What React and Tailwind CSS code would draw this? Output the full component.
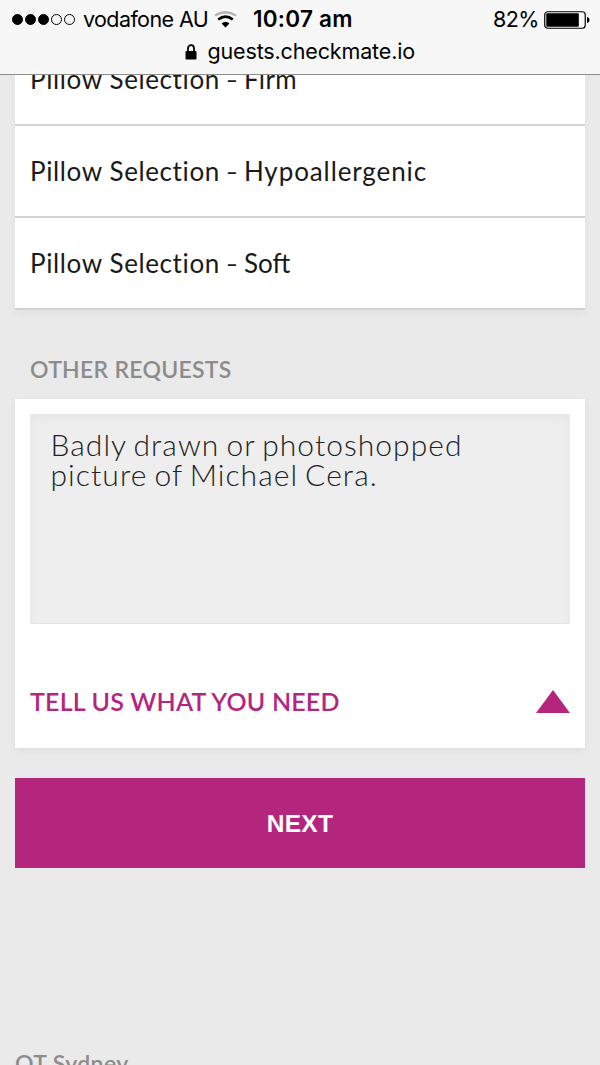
import React, { useState } from 'react';

const pillows = [
  { name: 'Firm', spacing: 'tracking-[0.3px]' },
  { name: 'Hypoallergenic', spacing: 'tracking-[0.9px]' },
  { name: 'Soft', spacing: 'tracking-normal' },
];

const StatusBar = () => (
  <header className="relative z-10 h-[75px] shrink-0 bg-[#f7f7f7] border-b border-[#8e8e8e] text-black font-['Inter',sans-serif]">
    <div className="flex h-[39px] items-center pl-3 pr-[10px] text-[21.5px] leading-none">
      <div className="flex gap-[2px]">
        {[1, 1, 1, 0, 0].map((on, i) => (
          <span key={i} className={`size-[11px] rounded-full border border-black ${on ? 'bg-black' : ''}`} />
        ))}
      </div>
      <span className="ml-[8px] w-[125px] whitespace-nowrap tracking-[-0.6px]">vodafone AU</span>
      <svg className="ml-[6px]" width="23" height="17" viewBox="0 0 23 17" fill="none">
        <path d="M1 4.6Q11.5 -2.2 22 4.6" stroke="#b5b5b5" strokeWidth="2.4" />
        <path d="M4.2 8.6Q11.5 2.8 18.8 8.6" stroke="#000" strokeWidth="2.6" />
        <path d="M7.6 12.6Q11.5 9 15.4 12.6L11.5 16.4Z" fill="#000" />
      </svg>
      <span className="ml-[16px] w-[101px] whitespace-nowrap text-[22.5px] font-semibold tracking-[0.25px]">10:07 am</span>
      <span className="ml-auto w-[45px] whitespace-nowrap tracking-[-0.6px]">82%</span>
      <svg className="ml-[6px]" width="46" height="18" viewBox="0 0 46 18">
        <rect x="0.75" y="0.75" width="40.5" height="16.5" rx="3" fill="none" stroke="#000" strokeWidth="1.2" />
        <rect x="2.3" y="2.3" width="32.5" height="13.4" rx="1" fill="#000" />
        <path d="M43 6Q45.6 6.5 45.6 9T43 12Z" fill="#000" />
      </svg>
    </div>
    <div className="flex h-[26px] items-center pl-[185px] text-[21.5px] leading-none">
      <svg width="12" height="16" viewBox="0 0 12 16">
        <path d="M3 8V4.5a3 3.3 0 0 1 6 0V8" fill="none" stroke="#000" strokeWidth="1.8" />
        <rect x="0.5" y="7" width="11" height="8.6" rx="1" fill="#000" />
      </svg>
      <span className="ml-[10.5px] whitespace-nowrap tracking-[-0.15px]">guests.checkmate.io</span>
    </div>
  </header>
);

const App = () => {
  const [request, setRequest] = useState('Badly drawn or photoshopped\npicture of Michael Cera.');

  return (
    <div className="flex h-[1065px] w-[600px] flex-col overflow-hidden bg-[#eaeaea] font-['Lato',sans-serif]">
      <StatusBar />
      <main className="-mt-[41px] px-[15px]">
        <ul className="bg-white shadow-[0_4px_8px_rgba(0,0,0,0.04)]">
          {pillows.map(({ name, spacing }) => (
            <li
              key={name}
              className="flex h-[92px] items-center whitespace-pre border-b-2 border-[#d2d2d2] px-[15px] text-[26px] text-[#1a1a1a]"
            >
              <span className="tracking-[0.62px]">Pillow Selection</span>
              <span className="inline-block w-[24px] pl-[6px]">
                <span className="inline-block origin-left scale-x-[0.78]">–</span>
              </span>
              <span className={spacing}>{name}</span>
            </li>
          ))}
        </ul>

        <h2 className="mt-[44px] px-[15px] text-[23px] leading-[30px] font-semibold tracking-[0.27px] text-[#8c8c8c]">
          OTHER REQUESTS
        </h2>

        <section className="mt-[15px] h-[349px] bg-white p-[15px] shadow-[0_2px_8px_rgba(0,0,0,0.06)]">
          <textarea
            value={request}
            onChange={(e) => setRequest(e.target.value)}
            spellCheck={false}
            className="block h-[210px] w-full resize-none rounded-none border border-[#e6e6e6] bg-[#eee] px-[19.5px] pt-[14px] text-[30px] leading-[30px] font-light tracking-[1.05px] [word-spacing:-2.2px] text-[#222] shadow-[inset_0_5px_8px_rgba(0,0,0,0.03)] outline-none"
          />
          <div className="mt-[57px] flex h-10 items-center justify-between text-[#b4267e]">
            <span className="pt-px text-[25px] font-semibold tracking-[0.2px]">TELL US WHAT YOU NEED</span>
            <svg width="34" height="23" viewBox="0 0 34 23">
              <path d="M17 0L34 23H0Z" fill="currentColor" />
            </svg>
          </div>
        </section>

        <button className="mt-[30px] block h-[90px] w-full bg-[#b4267e] pt-[3px] font-['Liberation_Sans',sans-serif] text-[24.5px] font-bold tracking-[0.3px] text-white">
          NEXT
        </button>

        <p className="mt-[180px] text-[23px] leading-[30px] font-semibold tracking-[0.4px] text-[#8c8c8c]">QT Sydney</p>
      </main>
    </div>
  );
};

export default App;
